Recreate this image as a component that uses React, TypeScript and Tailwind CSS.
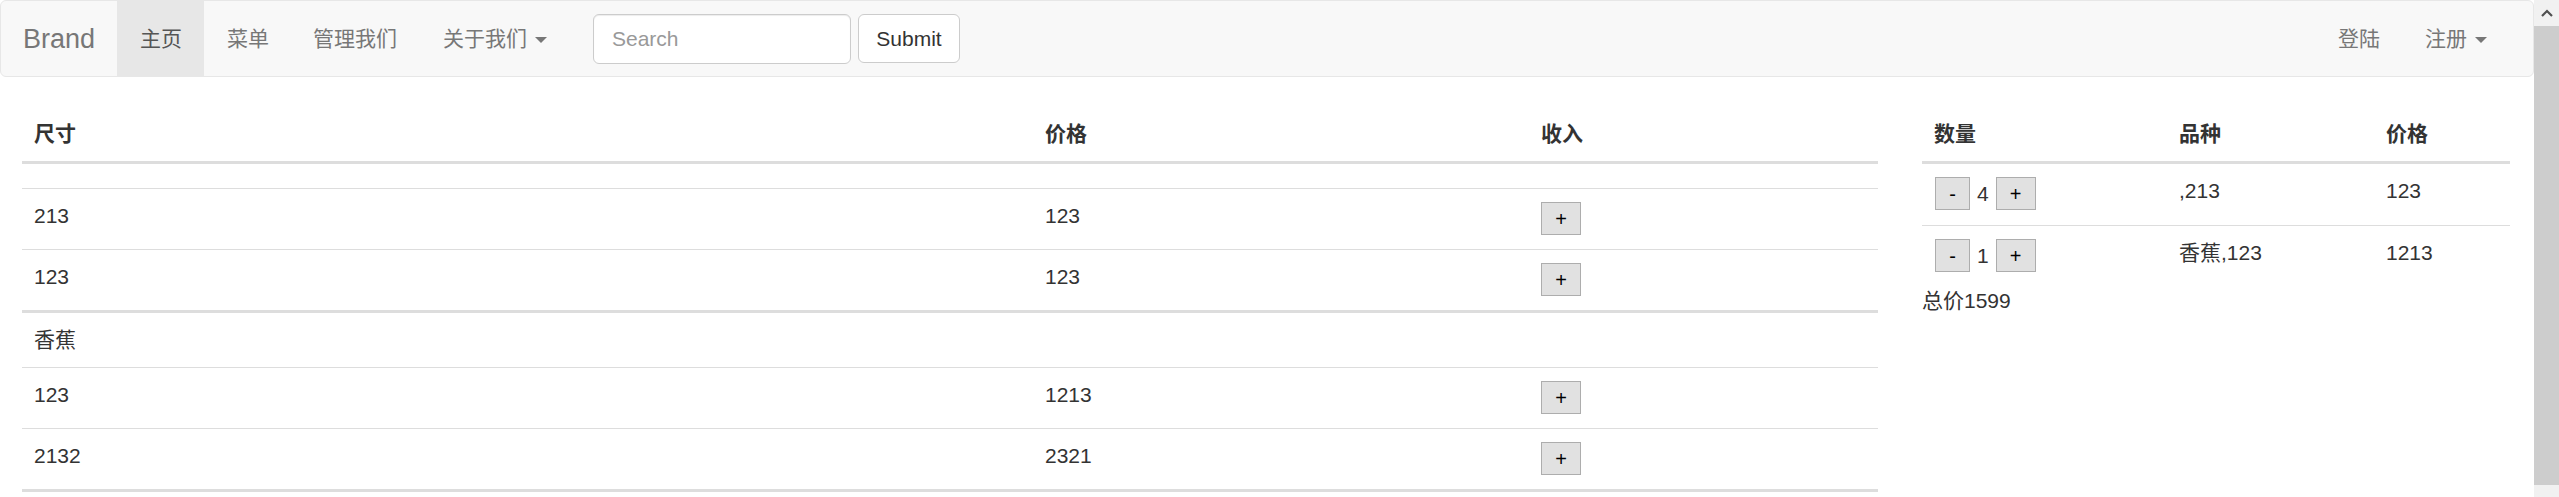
import type { ReactNode } from "react";

const groups = [
	{
		name: "",
		items: [
			{ size: "213", price: "123" },
			{ size: "123", price: "123" },
		],
	},
	{
		name: "香蕉",
		items: [
			{ size: "123", price: "1213" },
			{ size: "2132", price: "2321" },
		],
	},
];

const cart = [
	{ qty: 4, kind: ",213", price: "123" },
	{ qty: 1, kind: "香蕉,123", price: "1213" },
];

function Caret() {
	return (
		<span className="ml-[8px] mt-[3px] inline-block h-0 w-0 border-x-[6px] border-t-[6px] border-x-transparent border-t-[#777]" />
	);
}

function NavLink({ children, active, className }: { children: ReactNode; active?: boolean; className: string }) {
	return (
		<a
			className={`flex h-full items-center pl-[23px] ${active ? "bg-[#e7e7e7] text-[#555]" : "text-[#777]"} ${className}`}
		>
			{children}
		</a>
	);
}

function RawButton({ label, wide }: { label: string; wide?: boolean }) {
	return (
		<button
			type="button"
			className={`flex h-[33px] items-center justify-center border border-[#adadad] bg-[#e1e1e1] text-[20px] leading-none text-black ${wide ? "w-[40px]" : "w-[35px]"}`}
		>
			{label}
		</button>
	);
}

const leftCols = "grid grid-cols-[1011px_496px_1fr]";
const rightCols = "grid grid-cols-[245px_207px_1fr]";

export default function App() {
	return (
		<div className="flex h-[497px] w-full overflow-hidden bg-white font-['Liberation_Sans','Noto_Sans_CJK_SC',sans-serif] text-[21px] leading-[30px] text-[#333]">
			<div className="flex min-w-0 flex-1 flex-col">
				<nav className="flex h-[77px] shrink-0 items-center rounded-[6px] border border-[#e7e7e7] bg-[#f8f8f8] pr-[22px]">
					<a className="flex h-full w-[116px] items-center pl-[22px] text-[27px] text-[#777]">Brand</a>
					<NavLink active className="w-[87px]">主页</NavLink>
					<NavLink className="w-[87px]">菜单</NavLink>
					<NavLink className="w-[129px] !pl-[22px]">管理我们</NavLink>
					<NavLink className="w-[150px]">
						关于我们
						<Caret />
					</NavLink>
					<form className="flex items-center pl-[23px]">
						<input
							placeholder="Search"
							className="h-[50px] w-[258px] rounded-[6px] border border-[#ccc] bg-white px-[18px] text-[21px] text-[#555] shadow-[inset_0_1px_1px_rgba(0,0,0,0.075)] outline-none placeholder:text-[#999]"
						/>
						<button
							type="button"
							className="ml-[7px] h-[49px] w-[102px] rounded-[6px] border border-[#ccc] bg-white text-[21px] text-[#333]"
						>
							Submit
						</button>
					</form>
					<div className="ml-auto flex h-full">
						<NavLink className="w-[87px]">登陆</NavLink>
						<NavLink className="w-[109px]">
							注册
							<Caret />
						</NavLink>
					</div>
				</nav>

				<div className="mt-[30px] flex">
					<div className="w-[1900px] shrink-0 px-[22px]">
						<div className={`${leftCols} h-[57px] border-b-[3px] border-[#ddd] font-bold`}>
							<div className="px-[12px] pt-[12px]">尺寸</div>
							<div className="px-[12px] pt-[12px]">价格</div>
							<div className="px-[12px] pt-[12px]">收入</div>
						</div>
						{groups.map((group, gi) => (
							<div key={gi}>
								<div
									className={`${leftCols} ${group.name ? "h-[57px] border-t-[3px]" : "h-[24px]"} border-[#ddd]`}
								>
									<div className="px-[12px] pt-[12px]">{group.name}</div>
								</div>
								{group.items.map((item, ii) => (
									<div key={ii} className={`${leftCols} h-[61px] border-t border-[#ddd]`}>
										<div className="px-[12px] pt-[12px]">{item.size}</div>
										<div className="px-[12px] pt-[12px]">{item.price}</div>
										<div className="px-[12px] pt-[13px]">
											<RawButton label="+" wide />
										</div>
									</div>
								))}
							</div>
						))}
						<div className="h-[30px] border-t-[3px] border-[#ddd]" />
					</div>

					<div className="min-w-0 flex-1 pl-[22px] pr-[24px]">
						<div className={`${rightCols} h-[57px] border-b-[3px] border-[#ddd] font-bold`}>
							<div className="px-[12px] pt-[12px]">数量</div>
							<div className="px-[12px] pt-[12px]">品种</div>
							<div className="px-[12px] pt-[12px]">价格</div>
						</div>
						{cart.map((row, i) => (
							<div key={i} className={`${rightCols} h-[61px] ${i > 0 ? "border-t border-[#ddd]" : "h-[60px]"}`}>
								<div className="flex items-start gap-[7px] pl-[13px] pt-[13px]">
									<RawButton label="-" />
									<span className="leading-[33px]">{row.qty}</span>
									<RawButton label="+" wide />
								</div>
								<div className="px-[12px] pt-[12px]">{row.kind}</div>
								<div className="px-[12px] pt-[12px]">{row.price}</div>
							</div>
						))}
						<div>总价1599</div>
					</div>
				</div>
			</div>

			<div className="flex w-[25px] shrink-0 flex-col bg-[#f1f1f1]">
				<div className="flex h-[26px] items-center justify-center">
					<svg width="12" height="8" viewBox="0 0 12 8" fill="none">
						<polyline points="1,7 6,2 11,7" stroke="#505050" strokeWidth="2.2" />
					</svg>
				</div>
				<div className="h-[459px] bg-[#cdcdcd]" />
			</div>
		</div>
	);
}
